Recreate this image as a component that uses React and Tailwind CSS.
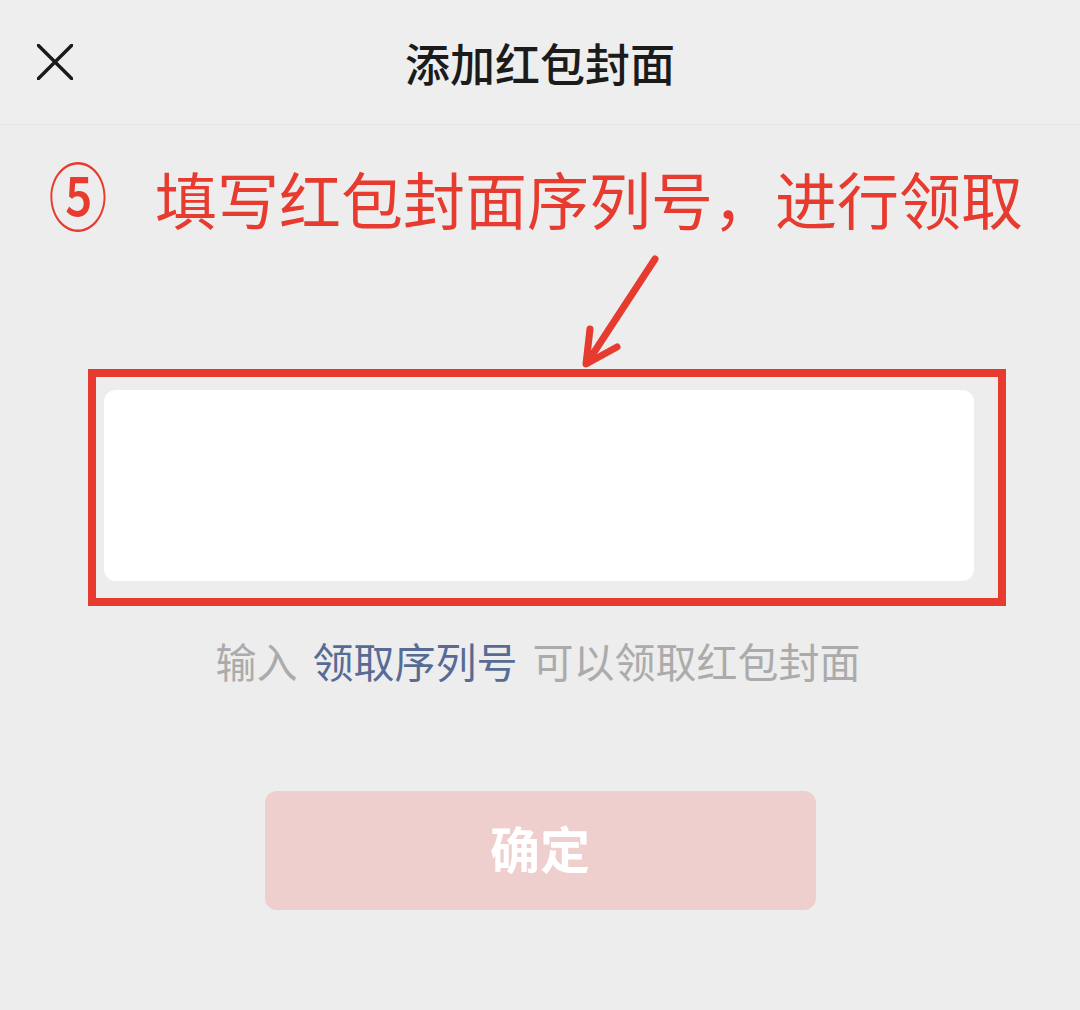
import React from 'react';

const cjk = { fontFamily: '"Noto Sans CJK SC", "Noto Sans", sans-serif' };

function CloseIcon() {
  return (
    <svg width="36" height="36" viewBox="0 0 36 36" fill="none">
      <path d="M1 1L35 35M35 1L1 35" stroke="#1a1a1a" strokeWidth="3.4" strokeLinecap="round" />
    </svg>
  );
}

export default function App() {
  return (
    <div className="w-[1080px] h-[1010px] bg-[#ededed] overflow-hidden" style={cjk}>
      {/* Header */}
      <div className="h-[125px] bg-[#eeeeee] border-b border-[#e4e4e4] grid grid-cols-[1fr_auto_1fr] items-center">
        <div className="pl-[37px] flex items-center">
          <CloseIcon />
        </div>
        <h1 className="text-[45px] leading-none font-medium text-[#1b1b1b]">添加红包封面</h1>
        <div></div>
      </div>

      {/* Annotation */}
      <div className="pt-[42px] h-[118px] pl-[47px] flex items-start gap-[46px] text-[62px] leading-none text-[#e63b2e] whitespace-nowrap">
        <span className="inline-block font-medium scale-y-[1.2] scale-x-[0.95] translate-y-[-5px]">⑤</span>
        <span>填写红包封面序列号，进行领取</span>
      </div>
      <svg width="1080" height="126" viewBox="0 0 1080 126" className="block">
        <g stroke="#e63b2e" strokeWidth="7" strokeLinecap="round" strokeLinejoin="round" fill="none">
          <path d="M655 16L587 120" />
          <path d="M590 86L586 121L617 104" />
        </g>
      </svg>

      {/* Input with red highlight */}
      <div className="ml-[88px] w-[918px] h-[237px] border-[8px] border-[#e63b2e] pl-[8px] pt-[13px] pr-[24px] pb-[17px]">
        <div className="w-full h-full bg-white rounded-[12px]"></div>
      </div>

      {/* Hint */}
      <div className="mt-[34px] pr-[4px] flex justify-center gap-[15px] text-[41px] leading-none whitespace-nowrap">
        <span className="text-[#ababab]">输入</span>
        <span className="text-[#576b95]">领取序列号</span>
        <span className="text-[#ababab]">可以领取红包封面</span>
      </div>

      {/* Button */}
      <div className="mt-[110px] flex justify-center">
        <button className="w-[551px] h-[119px] pb-[8px] rounded-[12px] bg-[#efcfce] text-white text-[50px] font-bold leading-none">
          确定
        </button>
      </div>
    </div>
  );
}
